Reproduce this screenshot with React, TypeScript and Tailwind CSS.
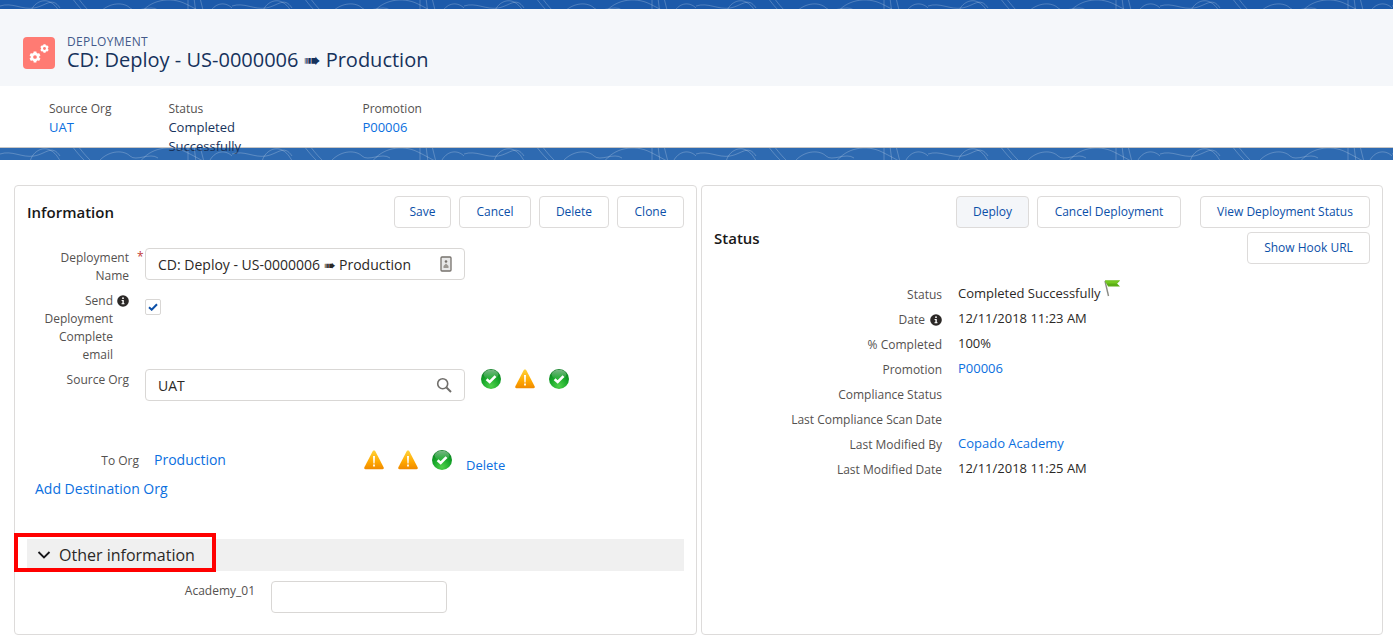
import React from "react";

const F = { fontFamily: '"Open Sans", "DejaVu Sans", sans-serif' };

function Band({ className, id }: { className: string; id: string }) {
  return (
    <svg className={className} width="100%" aria-hidden="true">
      <defs>
        <pattern id={id} x="0" y="0" width="232" height="40" patternUnits="userSpaceOnUse">
          <g fill="none" stroke="#ffffff" strokeOpacity="0.28" strokeWidth="0.8">
            <path d="M0 6C12 2 22 10 34 8S52 -4 60 8" />
            <path d="M30 14C32 4 42 -2 50 2S58 12 62 14" />
            <path d="M72 -2C78 6 82 10 86 14M78 -2C84 6 88 10 92 14" />
            <path d="M100 12C110 2 124 2 130 8S150 4 158 10" />
            <path d="M140 14C150 0 170 -4 186 4S200 12 206 14" />
            <path d="M188 -2V14M194 -2L196 14M200 -2L204 14" />
            <path d="M210 12C216 2 226 2 232 8" />
          </g>
        </pattern>
      </defs>
      <rect width="100%" height="100%" fill={`url(#${id})`} />
    </svg>
  );
}

function Btn({ children, active, w }: { children: React.ReactNode; active?: boolean; w: string }) {
  return (
    <button className={`h-8 shrink-0 rounded border border-[#dddbda] text-[12px] text-[#0b4fa8] ${active ? "bg-[#f4f6f9]" : "bg-white"} ${w}`}>
      {children}
    </button>
  );
}

function Info() {
  return (
    <svg width="12" height="12" viewBox="0 0 12 12" className="shrink-0">
      <circle cx="6" cy="6" r="5.8" fill="#2b2826" />
      <rect x="5.2" y="2.4" width="1.6" height="1.6" fill="#fff" />
      <path d="M4.6 5h2.2v3.2h.7v1H4.5v-1h.9V6h-.8z" fill="#fff" />
    </svg>
  );
}

function Check() {
  return (
    <svg width="20" height="20" viewBox="0 0 20 20" className="shrink-0">
      <defs>
        <radialGradient id="gc" cx="50%" cy="85%" r="80%">
          <stop offset="0" stopColor="#4fd14a" />
          <stop offset="0.6" stopColor="#14a428" />
          <stop offset="1" stopColor="#0a7f20" />
        </radialGradient>
        <linearGradient id="gs" x1="0" y1="0" x2="0" y2="1">
          <stop offset="0" stopColor="#fff" stopOpacity="0.45" />
          <stop offset="1" stopColor="#fff" stopOpacity="0.02" />
        </linearGradient>
      </defs>
      <circle cx="10" cy="10" r="10" fill="url(#gc)" />
      <ellipse cx="10" cy="5.6" rx="7.4" ry="4.8" fill="url(#gs)" />
      <path d="M5.6 10.2l3.1 2.8 5.8-5.8" fill="none" stroke="#fff" strokeWidth="2.6" />
    </svg>
  );
}

function Warn() {
  return (
    <svg width="20" height="20" viewBox="0 0 20 20" className="shrink-0">
      <defs>
        <linearGradient id="gw" x1="0" y1="0" x2="0" y2="1">
          <stop offset="0" stopColor="#ffd23a" />
          <stop offset="0.6" stopColor="#ffa800" />
          <stop offset="1" stopColor="#f08a00" />
        </linearGradient>
      </defs>
      <path d="M10 .6c.8 0 1.2.5 1.6 1.2l8 15.4c.5 1 .1 2-1 2H1.4c-1.1 0-1.5-1-1-2l8-15.4C8.800 1.100 9.200.6 10 .6z" fill="url(#gw)" />
      <path d="M9 6h2l-.4 7.500h-1.200z" fill="#fff" />
      <rect x="9.100" y="14.500" width="1.800" height="2" fill="#fff" />
    </svg>
  );
}

function Gears() {
  const gear = (cx: number, cy: number, r: number) => (
    <g>
      {[0, 60, 120].map((a) => (
        <rect key={a} x={cx - r * 0.32} y={cy - r * 1.25} width={r * 0.64} height={r * 2.5} fill="#fff" transform={`rotate(${a} ${cx} ${cy})`} />
      ))}
      <circle cx={cx} cy={cy} r={r} fill="#fff" />
      <circle cx={cx} cy={cy} r={r * 0.42} fill="#ff7b73" />
    </g>
  );
  return (
    <div className="flex h-8 w-8 shrink-0 items-center justify-center rounded bg-[#ff7b73]">
      <svg width="32" height="32" viewBox="0 0 32 32">
        {gear(12, 20, 4.4)}
        {gear(21.500, 11.500, 3.400)}
      </svg>
    </div>
  );
}

function Input({ value, icon, w }: { value?: string; icon?: React.ReactNode; w: string }) {
  return (
    <div className={`flex h-8 shrink-0 items-center justify-between rounded border border-[#d9d7d5] bg-white pl-3 pr-3 text-[14px] text-[#16325c] ${w}`}>
      <span className="text-[#2b2826]">{value}</span>
      {icon}
    </div>
  );
}

function Field({ label, icon, children }: { label: string; icon?: boolean; children?: React.ReactNode }) {
  return (
    <div className="flex h-[25px] items-start">
      <div className="flex w-[240px] shrink-0 items-center justify-end gap-[5px] pt-[2px] text-[12px] leading-[18px] text-[#54514f]">
        {label}
        {icon && <Info />}
      </div>
      <div className="ml-4 text-[13px] leading-[18px] text-[#2b2826]">{children}</div>
    </div>
  );
}

const Link = ({ children, className = "" }: { children: React.ReactNode; className?: string }) => (
  <a className={`text-[#0b6fe0] ${className}`}>{children}</a>
);

export default function App() {
  return (
    <div className="h-[637px] overflow-hidden bg-white" style={F}>
      <Band className="block h-[9px] bg-[#1c5aaa]" id="p1" />
      <div className="flex h-[77px] items-center gap-[12px] bg-[#f5f7fa] pl-[23px] pt-[10px]">
        <Gears />
        <div className="text-[#16325c]">
          <div className="text-[12px] leading-[14px] tracking-[0.3px] text-[#43598a]">DEPLOYMENT</div>
          <div className="text-[20px] leading-[22px]">CD: Deploy - US-0000006 ➠ Production</div>
        </div>
      </div>
      <div className="flex h-[62px] gap-[57px] border-b border-[#c9c7c5] bg-white pl-[49px] pt-[13px] text-[12px] leading-[19px]">
        <div>
          <div className="text-[#54514f]">Source Org</div>
          <Link className="text-[13px]">UAT</Link>
        </div>
        <div className="w-[137px] shrink-0">
          <div className="text-[#54514f]">Status</div>
          <div className="text-[13px] text-[#16325c]">Completed Successfully</div>
        </div>
        <div>
          <div className="text-[#54514f]">Promotion</div>
          <Link className="text-[13px]">P00006</Link>
        </div>
      </div>
      <Band className="block h-[12px] bg-[#2e6ab1]" id="p2" />

      <div className="mt-[25px] flex gap-[4px] pl-[14px]">
        {/* left card */}
        <section className="relative h-[450px] w-[683px] shrink-0 rounded border border-[#dddbda] bg-white">
          <div className="flex items-center justify-between pl-[12px] pr-[12px] pt-[10px]">
            <h2 className="text-[15px] font-semibold text-[#181818]">Information</h2>
            <div className="flex gap-2">
              <Btn w="w-[57px]">Save</Btn>
              <Btn w="w-[72px]">Cancel</Btn>
              <Btn w="w-[70px]">Delete</Btn>
              <Btn w="w-[67px]">Clone</Btn>
            </div>
          </div>

          <div className="mt-[20px] flex h-8 items-start">
            <div className="w-[114px] shrink-0 pt-[1px] text-right text-[12px] leading-[18px] text-[#54514f]">
              Deployment<br />Name
            </div>
            <span className="w-4 shrink-0 pl-2 text-[12px] leading-[18px] text-[#c23934]">*</span>
            <Input
              w="w-[320px]"
              value="CD: Deploy - US-0000006 ➠ Production"
              icon={
                <svg width="12" height="16" viewBox="0 0 12 16">
                  <rect x="1" y="1" width="10" height="14" rx="1" fill="#e8e8e8" stroke="#76716c" strokeWidth="1.300" />
                  <circle cx="6" cy="5.500" r="1.300" fill="#76716c" />
                  <path d="M3.500 10l2.500-2.500 2.500 2.500v2h-5z" fill="#9c9893" />
                </svg>
              }
            />
          </div>

          <div className="mt-[12px] flex h-[77px] items-start">
            <div className="flex w-[114px] shrink-0 justify-end gap-[4px]">
              <div className="pr-0 text-right text-[12px] leading-[18px] text-[#54514f]">
                Send<br />Deployment<br />Complete<br />email
              </div>
              <span className="mt-[3px]"><Info /></span>
            </div>
            <span className="w-4 shrink-0" />
            <div className="mt-[7px] flex h-4 w-4 items-center justify-center rounded-[2px] border border-[#d9d7d5] bg-white">
              <svg width="10" height="8" viewBox="0 0 10 8">
                <path d="M1 4.200l2.700 2.500L9 1.200" fill="none" stroke="#0b4fa8" strokeWidth="2" />
              </svg>
            </div>
          </div>

          <div className="flex h-8 items-start">
            <div className="w-[114px] shrink-0 pt-[2px] text-right text-[12px] leading-[18px] text-[#54514f]">Source Org</div>
            <span className="w-4 shrink-0" />
            <Input
              w="w-[320px]"
              value="UAT"
              icon={
                <svg width="16" height="16" viewBox="0 0 16 16" fill="none" stroke="#706e6b" strokeWidth="1.600">
                  <circle cx="6.700" cy="6.700" r="5" />
                  <path d="M10.500 10.500L15 15" strokeWidth="2" />
                </svg>
              }
            />
            <div className="ml-4 flex gap-[14px]">
              <Check />
              <Warn />
              <Check />
            </div>
          </div>

          <div className="mt-[49px] flex h-5 items-start">
            <div className="w-[124px] shrink-0 pt-[2px] text-right text-[12px] leading-[18px] text-[#54514f]">To Org</div>
            <Link className="ml-[15px] w-[210px] shrink-0 text-[14px] leading-[20px]">Production</Link>
            <div className="flex gap-[14px]">
              <Warn />
              <Warn />
              <Check />
            </div>
            <Link className="ml-[14px] mt-[5px] text-[13px] leading-[20px]">Delete</Link>
          </div>

          <div className="mt-[9px] pl-[20px] text-[14px] leading-[20px]">
            <Link>Add Destination Org</Link>
          </div>

          <div className="relative ml-[12px] mr-[12px] mt-[40px] flex h-8 items-center bg-[#f0f0f0] pl-[10px] text-[16px] text-[#2b2826]">
            <svg width="14" height="8" viewBox="0 0 14 8" fill="none" stroke="#16161a" strokeWidth="1.800" className="mr-[8px]">
              <path d="M1.500 1l5.500 5.500L12.500 1" />
            </svg>
            Other information
            <div className="absolute -left-[13px] -top-[6px] h-[39px] w-[202px] border-4 border-[#ff0000]" />
          </div>

          <div className="mt-[10px] flex items-start">
            <div className="w-[240px] shrink-0 text-right text-[12px] leading-[20px] text-[#54514f]">Academy_01</div>
            <div className="ml-4"><Input w="w-[176px]" /></div>
          </div>
        </section>

        {/* right card */}
        <section className="h-[450px] w-[682px] shrink-0 rounded border border-[#dddbda] bg-white">
          <div className="flex justify-between pl-[12px] pr-[12px] pt-[10px]">
            <h2 className="mt-[32px] text-[15px] font-semibold leading-[20px] text-[#181818]">Status</h2>
            <div className="flex flex-col items-end gap-[4px]">
              <div className="flex gap-2">
                <Btn w="w-[73px]" active>Deploy</Btn>
                <Btn w="w-[144px]">Cancel Deployment</Btn>
                <span className="w-[3px]" />
                <Btn w="w-[170px]">View Deployment Status</Btn>
              </div>
              <Btn w="w-[123px]">Show Hook URL</Btn>
            </div>
          </div>
          <div className="mt-[20px]">
            <Field label="Status">
              <span className="flex items-start">
                Completed Successfully
                <svg width="17" height="17" viewBox="0 0 17 17" className="ml-[3px] -mt-[4px]">
                  <path d="M1 1l3.500 15" stroke="#8a8a84" strokeWidth="1.400" />
                  <path d="M1 .5h15l-3 3 3 3H4z" fill="#5aae14" />
                  <path d="M1 .5h15l-3 3H2z" fill="#74c820" />
                </svg>
              </span>
            </Field>
            <Field label="Date" icon>12/11/2018 11:23 AM</Field>
            <Field label="% Completed">100%</Field>
            <Field label="Promotion"><Link>P00006</Link></Field>
            <Field label="Compliance Status" />
            <Field label="Last Compliance Scan Date" />
            <Field label="Last Modified By"><Link>Copado Academy</Link></Field>
            <Field label="Last Modified Date">12/11/2018 11:25 AM</Field>
          </div>
        </section>
      </div>
    </div>
  );
}
